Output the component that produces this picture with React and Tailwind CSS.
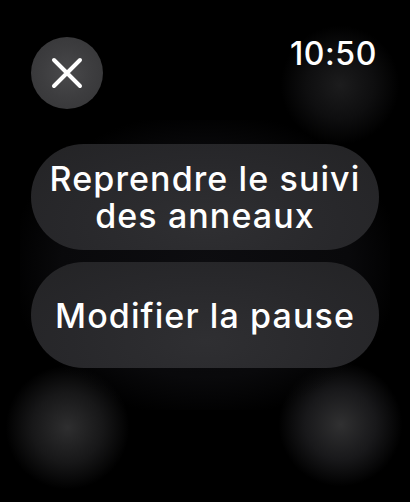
export default function App() {
  return (
    <div className="relative w-[410px] h-[502px] overflow-hidden bg-black text-white font-['Inter','Noto_Sans',sans-serif]">
      {/* soft background glows */}
      <div className="absolute left-[5px] top-[365px] w-[125px] h-[125px] rounded-full bg-[radial-gradient(circle,#2e2e2f_0%,#171718_40%,transparent_70%)]" />
      <div className="absolute left-[278px] top-[362px] w-[125px] h-[125px] rounded-full bg-[radial-gradient(circle,#303031_0%,#18181a_40%,transparent_70%)]" />
      <div className="absolute left-[280px] top-[25px] w-[120px] h-[120px] rounded-full bg-[radial-gradient(circle,#1c1c1d_0%,#0e0e0f_40%,transparent_70%)]" />
      <div className="absolute left-[20px] top-[120px] w-[370px] h-[290px] rounded-[80px] bg-[radial-gradient(ellipse,#0d0d10_0%,#09090b_55%,transparent_75%)]" />

      <div className="relative flex flex-col">
        <div className="flex items-start justify-between pt-[37px] pl-[31px] pr-[33px]">
          <button className="flex items-center justify-center w-[72px] h-[72px] rounded-full bg-[radial-gradient(circle,#49494b_0%,#3d3d3f_50%,#343436_100%)]">
            <svg width="32" height="32" viewBox="0 0 32 32" fill="none" stroke="white" strokeWidth="4" strokeLinecap="round">
              <path d="M3 3 L29 29 M29 3 L3 29" />
            </svg>
          </button>
          <span className="mt-[1px] text-[32px] leading-none font-medium tracking-[0.6px]">10:50</span>
        </div>

        <div className="flex flex-col gap-[12px] mt-[35px] px-[31px]">
          <button className="flex items-center justify-center h-[106px] rounded-full bg-[radial-gradient(ellipse_at_50%_75%,#2f2f32_0%,#28282b_55%,#232325_100%)]">
            <span className="text-center text-[34px] leading-[37px] font-medium tracking-[1.1px]">
              Reprendre le suivi
              <br />
              des anneaux
            </span>
          </button>
          <button className="flex items-center justify-center h-[106px] rounded-full bg-[radial-gradient(ellipse_at_50%_75%,#2f2f32_0%,#28282b_55%,#232325_100%)]">
            <span className="text-[34px] leading-[37px] font-medium tracking-[1.1px]">Modifier la pause</span>
          </button>
        </div>
      </div>
    </div>
  )
}
